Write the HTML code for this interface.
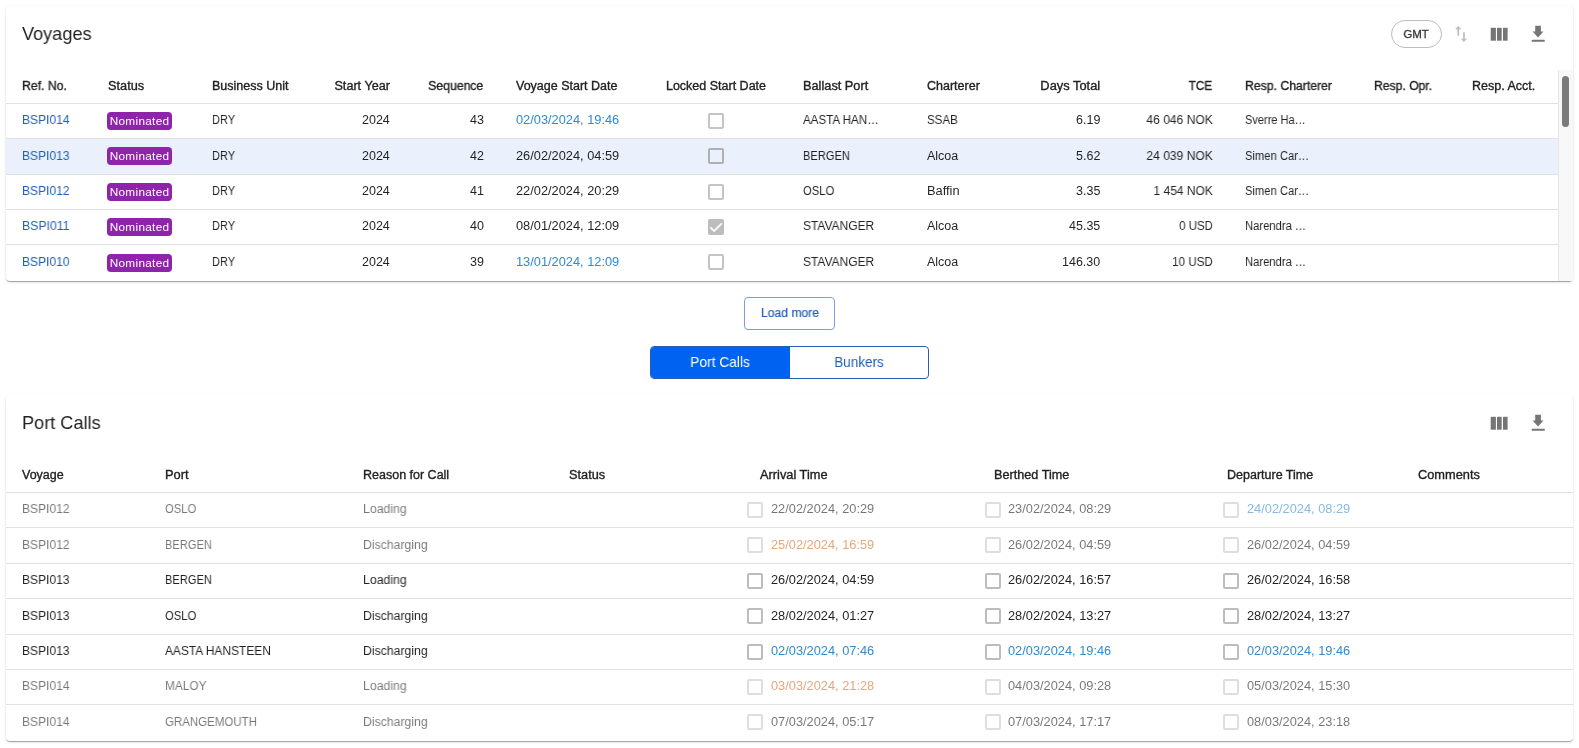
<!DOCTYPE html>
<html><head><meta charset="utf-8"><style>
html,body{margin:0;padding:0;background:#fff;width:1579px;height:748px;overflow:hidden;position:relative}
body{font-family:"Liberation Sans",sans-serif}
.t{position:absolute;white-space:nowrap;will-change:transform}
.card{position:absolute;background:#fff;border-radius:4px;box-shadow:0px 2px 1px -1px rgba(0,0,0,0.2),0px 1px 1px 0px rgba(0,0,0,0.14),0px 1px 3px 0px rgba(0,0,0,0.12)}
.hl{position:absolute;height:1px;background:#e0e0e0}
.pill{position:absolute;border:1px solid #bdbdbd;border-radius:14px}
.badge{position:absolute;width:64.8px;height:18px;background:#8e24aa;color:#fff;border-radius:4px;font-size:11.8px;line-height:18.5px;letter-spacing:0.3px;text-indent:0.3px;text-align:center;will-change:transform}
.cb{position:absolute;width:16px;height:16px;box-sizing:border-box;border:2px solid #c4c4c4;border-radius:2px}
.chk{background:#c4c4c4}
</style></head><body>
<div class="card" style="left:6px;top:6px;width:1567px;height:275px"></div>
<div class="card" style="left:6px;top:395px;width:1567px;height:346px"></div>
<div class="t" style="left:22.30px;top:23.45px;font-size:18.5px;line-height:21.27px;color:#222;font-weight:400;transform:scaleX(0.980);transform-origin:0 0;">Voyages</div>
<div class="pill" style="left:1391px;top:20.2px;width:49px;height:25.5px"></div>
<div class="t" style="left:1215.60px;width:400px;text-align:center;top:28.40px;font-size:11.5px;line-height:13.22px;color:#333;font-weight:400;transform:scaleX(0.987);transform-origin:50% 0;-webkit-text-stroke:0.3px #333;">GMT</div>
<div class="t" style="left:22.30px;top:78.78px;font-size:12.5px;line-height:14.37px;color:#222;font-weight:400;transform:scaleX(0.978);transform-origin:0 0;-webkit-text-stroke:0.35px #222;">Ref. No.</div>
<div class="t" style="left:107.60px;top:78.78px;font-size:12.5px;line-height:14.37px;color:#222;font-weight:400;transform:scaleX(1.020);transform-origin:0 0;-webkit-text-stroke:0.35px #222;">Status</div>
<div class="t" style="left:211.90px;top:78.78px;font-size:12.5px;line-height:14.37px;color:#222;font-weight:400;-webkit-text-stroke:0.35px #222;">Business Unit</div>
<div class="t" style="right:1189.10px;top:78.78px;font-size:12.5px;line-height:14.37px;color:#222;font-weight:400;transform:scaleX(1.010);transform-origin:100% 0;-webkit-text-stroke:0.35px #222;">Start Year</div>
<div class="t" style="right:1095.50px;top:78.78px;font-size:12.5px;line-height:14.37px;color:#222;font-weight:400;transform:scaleX(0.979);transform-origin:100% 0;-webkit-text-stroke:0.35px #222;">Sequence</div>
<div class="t" style="left:516.20px;top:78.78px;font-size:12.5px;line-height:14.37px;color:#222;font-weight:400;-webkit-text-stroke:0.35px #222;">Voyage Start Date</div>
<div class="t" style="left:516.00px;width:400px;text-align:center;top:78.78px;font-size:12.5px;line-height:14.37px;color:#222;font-weight:400;-webkit-text-stroke:0.35px #222;">Locked Start Date</div>
<div class="t" style="left:803.30px;top:78.78px;font-size:12.5px;line-height:14.37px;color:#222;font-weight:400;transform:scaleX(1.021);transform-origin:0 0;-webkit-text-stroke:0.35px #222;">Ballast Port</div>
<div class="t" style="left:927.30px;top:78.78px;font-size:12.5px;line-height:14.37px;color:#222;font-weight:400;-webkit-text-stroke:0.35px #222;">Charterer</div>
<div class="t" style="right:478.50px;top:78.78px;font-size:12.5px;line-height:14.37px;color:#222;font-weight:400;transform:scaleX(1.028);transform-origin:100% 0;-webkit-text-stroke:0.35px #222;">Days Total</div>
<div class="t" style="right:366.60px;top:78.78px;font-size:12.5px;line-height:14.37px;color:#222;font-weight:400;transform:scaleX(0.935);transform-origin:100% 0;-webkit-text-stroke:0.35px #222;">TCE</div>
<div class="t" style="left:1245.20px;top:78.78px;font-size:12.5px;line-height:14.37px;color:#222;font-weight:400;transform:scaleX(0.978);transform-origin:0 0;-webkit-text-stroke:0.35px #222;">Resp. Charterer</div>
<div class="t" style="left:1373.70px;top:78.78px;font-size:12.5px;line-height:14.37px;color:#222;font-weight:400;transform:scaleX(0.972);transform-origin:0 0;-webkit-text-stroke:0.35px #222;">Resp. Opr.</div>
<div class="t" style="left:1471.50px;top:78.78px;font-size:12.5px;line-height:14.37px;color:#222;font-weight:400;-webkit-text-stroke:0.35px #222;">Resp. Acct.</div>
<div class="hl" style="left:6px;top:103px;width:1552.5px"></div>
<div class="hl" style="left:6px;top:138px;width:1552.5px"></div>
<div class="hl" style="left:6px;top:174px;width:1552.5px"></div>
<div class="hl" style="left:6px;top:209px;width:1552.5px"></div>
<div class="hl" style="left:6px;top:244px;width:1552.5px"></div>
<div style="position:absolute;left:6px;top:139px;width:1552.5px;height:35px;background:#eaf1fc"></div>
<div class="t" style="left:22.30px;top:112.78px;font-size:12.5px;line-height:14.37px;color:#1d5fb6;font-weight:400;transform:scaleX(0.962);transform-origin:0 0;">BSPI014</div>
<div class="badge" style="left:107.1px;top:111.80px">Nominated</div>
<div class="t" style="left:211.90px;top:112.78px;font-size:12.5px;line-height:14.37px;color:rgba(0,0,0,0.87);font-weight:400;transform:scaleX(0.887);transform-origin:0 0;">DRY</div>
<div class="t" style="right:1189.10px;top:112.78px;font-size:12.5px;line-height:14.37px;color:rgba(0,0,0,0.87);font-weight:400;">2024</div>
<div class="t" style="right:1095.50px;top:112.78px;font-size:12.5px;line-height:14.37px;color:rgba(0,0,0,0.87);font-weight:400;">43</div>
<div class="t" style="left:516.20px;top:112.78px;font-size:12.5px;line-height:14.37px;color:#2f8bd0;font-weight:400;transform:scaleX(1.024);transform-origin:0 0;">02/03/2024, 19:46</div>
<div class="cb" style="left:708px;top:113px;border-color:#c4c4c4"></div>
<div class="t" style="left:803.30px;top:112.78px;font-size:12.5px;line-height:14.37px;color:rgba(0,0,0,0.87);font-weight:400;transform:scaleX(0.927);transform-origin:0 0;">AASTA HAN…</div>
<div class="t" style="left:927.30px;top:112.78px;font-size:12.5px;line-height:14.37px;color:rgba(0,0,0,0.87);font-weight:400;transform:scaleX(0.924);transform-origin:0 0;">SSAB</div>
<div class="t" style="right:478.50px;top:112.78px;font-size:12.5px;line-height:14.37px;color:rgba(0,0,0,0.87);font-weight:400;">6.19</div>
<div class="t" style="right:366.60px;top:112.78px;font-size:12.5px;line-height:14.37px;color:rgba(0,0,0,0.87);font-weight:400;transform:scaleX(0.965);transform-origin:100% 0;">46 046 NOK</div>
<div class="t" style="left:1245.20px;top:112.78px;font-size:12.5px;line-height:14.37px;color:rgba(0,0,0,0.87);font-weight:400;transform:scaleX(0.883);transform-origin:0 0;">Sverre Ha…</div>
<div class="t" style="left:22.30px;top:148.78px;font-size:12.5px;line-height:14.37px;color:#1d5fb6;font-weight:400;transform:scaleX(0.962);transform-origin:0 0;">BSPI013</div>
<div class="badge" style="left:107.1px;top:147.30px">Nominated</div>
<div class="t" style="left:211.90px;top:148.78px;font-size:12.5px;line-height:14.37px;color:rgba(0,0,0,0.87);font-weight:400;transform:scaleX(0.887);transform-origin:0 0;">DRY</div>
<div class="t" style="right:1189.10px;top:148.78px;font-size:12.5px;line-height:14.37px;color:rgba(0,0,0,0.87);font-weight:400;">2024</div>
<div class="t" style="right:1095.50px;top:148.78px;font-size:12.5px;line-height:14.37px;color:rgba(0,0,0,0.87);font-weight:400;">42</div>
<div class="t" style="left:516.20px;top:148.78px;font-size:12.5px;line-height:14.37px;color:rgba(0,0,0,0.87);font-weight:400;transform:scaleX(1.024);transform-origin:0 0;">26/02/2024, 04:59</div>
<div class="cb" style="left:708px;top:148px;border-color:#b0b0b0"></div>
<div class="t" style="left:803.30px;top:148.78px;font-size:12.5px;line-height:14.37px;color:rgba(0,0,0,0.87);font-weight:400;transform:scaleX(0.888);transform-origin:0 0;">BERGEN</div>
<div class="t" style="left:927.30px;top:148.78px;font-size:12.5px;line-height:14.37px;color:rgba(0,0,0,0.87);font-weight:400;">Alcoa</div>
<div class="t" style="right:478.50px;top:148.78px;font-size:12.5px;line-height:14.37px;color:rgba(0,0,0,0.87);font-weight:400;">5.62</div>
<div class="t" style="right:366.60px;top:148.78px;font-size:12.5px;line-height:14.37px;color:rgba(0,0,0,0.87);font-weight:400;transform:scaleX(0.965);transform-origin:100% 0;">24 039 NOK</div>
<div class="t" style="left:1245.20px;top:148.78px;font-size:12.5px;line-height:14.37px;color:rgba(0,0,0,0.87);font-weight:400;transform:scaleX(0.896);transform-origin:0 0;">Simen Car…</div>
<div class="t" style="left:22.30px;top:183.78px;font-size:12.5px;line-height:14.37px;color:#1d5fb6;font-weight:400;transform:scaleX(0.962);transform-origin:0 0;">BSPI012</div>
<div class="badge" style="left:107.1px;top:182.80px">Nominated</div>
<div class="t" style="left:211.90px;top:183.78px;font-size:12.5px;line-height:14.37px;color:rgba(0,0,0,0.87);font-weight:400;transform:scaleX(0.887);transform-origin:0 0;">DRY</div>
<div class="t" style="right:1189.10px;top:183.78px;font-size:12.5px;line-height:14.37px;color:rgba(0,0,0,0.87);font-weight:400;">2024</div>
<div class="t" style="right:1095.50px;top:183.78px;font-size:12.5px;line-height:14.37px;color:rgba(0,0,0,0.87);font-weight:400;">41</div>
<div class="t" style="left:516.20px;top:183.78px;font-size:12.5px;line-height:14.37px;color:rgba(0,0,0,0.87);font-weight:400;transform:scaleX(1.024);transform-origin:0 0;">22/02/2024, 20:29</div>
<div class="cb" style="left:708px;top:184px;border-color:#c4c4c4"></div>
<div class="t" style="left:803.30px;top:183.78px;font-size:12.5px;line-height:14.37px;color:rgba(0,0,0,0.87);font-weight:400;transform:scaleX(0.902);transform-origin:0 0;">OSLO</div>
<div class="t" style="left:927.30px;top:183.78px;font-size:12.5px;line-height:14.37px;color:rgba(0,0,0,0.87);font-weight:400;transform:scaleX(1.026);transform-origin:0 0;">Baffin</div>
<div class="t" style="right:478.50px;top:183.78px;font-size:12.5px;line-height:14.37px;color:rgba(0,0,0,0.87);font-weight:400;">3.35</div>
<div class="t" style="right:366.60px;top:183.78px;font-size:12.5px;line-height:14.37px;color:rgba(0,0,0,0.87);font-weight:400;transform:scaleX(0.960);transform-origin:100% 0;">1 454 NOK</div>
<div class="t" style="left:1245.20px;top:183.78px;font-size:12.5px;line-height:14.37px;color:rgba(0,0,0,0.87);font-weight:400;transform:scaleX(0.896);transform-origin:0 0;">Simen Car…</div>
<div class="t" style="left:22.30px;top:218.78px;font-size:12.5px;line-height:14.37px;color:#1d5fb6;font-weight:400;transform:scaleX(0.981);transform-origin:0 0;">BSPI011</div>
<div class="badge" style="left:107.1px;top:218.30px">Nominated</div>
<div class="t" style="left:211.90px;top:218.78px;font-size:12.5px;line-height:14.37px;color:rgba(0,0,0,0.87);font-weight:400;transform:scaleX(0.887);transform-origin:0 0;">DRY</div>
<div class="t" style="right:1189.10px;top:218.78px;font-size:12.5px;line-height:14.37px;color:rgba(0,0,0,0.87);font-weight:400;">2024</div>
<div class="t" style="right:1095.50px;top:218.78px;font-size:12.5px;line-height:14.37px;color:rgba(0,0,0,0.87);font-weight:400;">40</div>
<div class="t" style="left:516.20px;top:218.78px;font-size:12.5px;line-height:14.37px;color:rgba(0,0,0,0.87);font-weight:400;transform:scaleX(1.024);transform-origin:0 0;">08/01/2024, 12:09</div>
<div class="cb chk" style="left:708px;top:219px;border:none;background:#bdbdbd"><svg style="position:absolute;left:0;top:0" width="16" height="16" viewBox="0 0 16 16"><path d="M2.4 8.4 L6.1 12 L13.8 4.3" stroke="#fff" stroke-width="1.7" fill="none"/></svg></div>
<div class="t" style="left:803.30px;top:218.78px;font-size:12.5px;line-height:14.37px;color:rgba(0,0,0,0.87);font-weight:400;transform:scaleX(0.958);transform-origin:0 0;">STAVANGER</div>
<div class="t" style="left:927.30px;top:218.78px;font-size:12.5px;line-height:14.37px;color:rgba(0,0,0,0.87);font-weight:400;">Alcoa</div>
<div class="t" style="right:478.50px;top:218.78px;font-size:12.5px;line-height:14.37px;color:rgba(0,0,0,0.87);font-weight:400;">45.35</div>
<div class="t" style="right:366.60px;top:218.78px;font-size:12.5px;line-height:14.37px;color:rgba(0,0,0,0.87);font-weight:400;transform:scaleX(0.914);transform-origin:100% 0;">0 USD</div>
<div class="t" style="left:1245.20px;top:218.78px;font-size:12.5px;line-height:14.37px;color:rgba(0,0,0,0.87);font-weight:400;transform:scaleX(0.898);transform-origin:0 0;">Narendra …</div>
<div class="t" style="left:22.30px;top:254.78px;font-size:12.5px;line-height:14.37px;color:#1d5fb6;font-weight:400;transform:scaleX(0.962);transform-origin:0 0;">BSPI010</div>
<div class="badge" style="left:107.1px;top:253.80px">Nominated</div>
<div class="t" style="left:211.90px;top:254.78px;font-size:12.5px;line-height:14.37px;color:rgba(0,0,0,0.87);font-weight:400;transform:scaleX(0.887);transform-origin:0 0;">DRY</div>
<div class="t" style="right:1189.10px;top:254.78px;font-size:12.5px;line-height:14.37px;color:rgba(0,0,0,0.87);font-weight:400;">2024</div>
<div class="t" style="right:1095.50px;top:254.78px;font-size:12.5px;line-height:14.37px;color:rgba(0,0,0,0.87);font-weight:400;">39</div>
<div class="t" style="left:516.20px;top:254.78px;font-size:12.5px;line-height:14.37px;color:#2f8bd0;font-weight:400;transform:scaleX(1.024);transform-origin:0 0;">13/01/2024, 12:09</div>
<div class="cb" style="left:708px;top:254px;border-color:#c4c4c4"></div>
<div class="t" style="left:803.30px;top:254.78px;font-size:12.5px;line-height:14.37px;color:rgba(0,0,0,0.87);font-weight:400;transform:scaleX(0.958);transform-origin:0 0;">STAVANGER</div>
<div class="t" style="left:927.30px;top:254.78px;font-size:12.5px;line-height:14.37px;color:rgba(0,0,0,0.87);font-weight:400;">Alcoa</div>
<div class="t" style="right:478.50px;top:254.78px;font-size:12.5px;line-height:14.37px;color:rgba(0,0,0,0.87);font-weight:400;">146.30</div>
<div class="t" style="right:366.60px;top:254.78px;font-size:12.5px;line-height:14.37px;color:rgba(0,0,0,0.87);font-weight:400;transform:scaleX(0.930);transform-origin:100% 0;">10 USD</div>
<div class="t" style="left:1245.20px;top:254.78px;font-size:12.5px;line-height:14.37px;color:rgba(0,0,0,0.87);font-weight:400;transform:scaleX(0.898);transform-origin:0 0;">Narendra …</div>
<div style="position:absolute;left:1558.3px;top:69.8px;width:14.7px;height:211px;background:#f8f8f8;border-left:1px solid #e6e6e6;box-sizing:border-box"></div>
<div style="position:absolute;left:1562px;top:75.8px;width:7.1px;height:51px;background:#7b7b7b;border-radius:4px"></div>
<div style="position:absolute;left:744.2px;top:297.2px;width:90.5px;height:32.8px;box-sizing:border-box;border:1px solid #7d9dd6;border-radius:4px"></div>
<div class="t" style="left:589.50px;width:400px;text-align:center;top:305.68px;font-size:12.5px;line-height:14.37px;color:#1d5fb6;font-weight:400;transform:scaleX(0.969);transform-origin:50% 0;-webkit-text-stroke:0.2px #1d5fb6;">Load more</div>
<div style="position:absolute;left:650.1px;top:346.1px;width:278.7px;height:32.5px;box-sizing:border-box;border:1px solid #2a5fb0;border-radius:4px;overflow:hidden"><div style="position:absolute;left:0;top:0;width:138.6px;height:100%;background:#0062f0"></div></div>
<div class="t" style="left:520.10px;width:400px;text-align:center;top:354.24px;font-size:14.5px;line-height:16.67px;color:#fff;font-weight:400;transform:scaleX(0.946);transform-origin:50% 0;">Port Calls</div>
<div class="t" style="left:658.90px;width:400px;text-align:center;top:354.24px;font-size:14.5px;line-height:16.67px;color:#1d5fb6;font-weight:400;transform:scaleX(0.933);transform-origin:50% 0;">Bunkers</div>
<div class="t" style="left:22.40px;top:412.35px;font-size:18.5px;line-height:21.27px;color:#222;font-weight:400;transform:scaleX(0.980);transform-origin:0 0;">Port Calls</div>
<div class="t" style="left:22.30px;top:468.08px;font-size:12.5px;line-height:14.37px;color:#222;font-weight:400;-webkit-text-stroke:0.35px #222;">Voyage</div>
<div class="t" style="left:165.20px;top:468.08px;font-size:12.5px;line-height:14.37px;color:#222;font-weight:400;transform:scaleX(1.032);transform-origin:0 0;-webkit-text-stroke:0.35px #222;">Port</div>
<div class="t" style="left:362.70px;top:468.08px;font-size:12.5px;line-height:14.37px;color:#222;font-weight:400;-webkit-text-stroke:0.35px #222;">Reason for Call</div>
<div class="t" style="left:569.00px;top:468.08px;font-size:12.5px;line-height:14.37px;color:#222;font-weight:400;transform:scaleX(1.020);transform-origin:0 0;-webkit-text-stroke:0.35px #222;">Status</div>
<div class="t" style="left:760.30px;top:468.08px;font-size:12.5px;line-height:14.37px;color:#222;font-weight:400;transform:scaleX(1.024);transform-origin:0 0;-webkit-text-stroke:0.35px #222;">Arrival Time</div>
<div class="t" style="left:994.40px;top:468.08px;font-size:12.5px;line-height:14.37px;color:#222;font-weight:400;transform:scaleX(1.013);transform-origin:0 0;-webkit-text-stroke:0.35px #222;">Berthed Time</div>
<div class="t" style="left:1226.60px;top:468.08px;font-size:12.5px;line-height:14.37px;color:#222;font-weight:400;-webkit-text-stroke:0.35px #222;">Departure Time</div>
<div class="t" style="left:1417.70px;top:468.08px;font-size:12.5px;line-height:14.37px;color:#222;font-weight:400;transform:scaleX(1.024);transform-origin:0 0;-webkit-text-stroke:0.35px #222;">Comments</div>
<div class="hl" style="left:6px;top:492px;width:1567px"></div>
<div class="hl" style="left:6px;top:527px;width:1567px"></div>
<div class="hl" style="left:6px;top:563px;width:1567px"></div>
<div class="hl" style="left:6px;top:598px;width:1567px"></div>
<div class="hl" style="left:6px;top:634px;width:1567px"></div>
<div class="hl" style="left:6px;top:669px;width:1567px"></div>
<div class="hl" style="left:6px;top:704px;width:1567px"></div>
<div class="t" style="left:22.30px;top:501.78px;font-size:12.5px;line-height:14.37px;color:rgba(0,0,0,0.54);font-weight:400;transform:scaleX(0.962);transform-origin:0 0;">BSPI012</div>
<div class="t" style="left:165.20px;top:501.78px;font-size:12.5px;line-height:14.37px;color:rgba(0,0,0,0.54);font-weight:400;transform:scaleX(0.902);transform-origin:0 0;">OSLO</div>
<div class="t" style="left:362.70px;top:501.78px;font-size:12.5px;line-height:14.37px;color:rgba(0,0,0,0.54);font-weight:400;transform:scaleX(0.983);transform-origin:0 0;">Loading</div>
<div class="cb" style="left:747.1px;top:502px;border-color:#dedede"></div>
<div class="t" style="left:770.90px;top:501.78px;font-size:12.5px;line-height:14.37px;color:rgba(0,0,0,0.54);font-weight:400;transform:scaleX(1.024);transform-origin:0 0;">22/02/2024, 20:29</div>
<div class="cb" style="left:984.8px;top:502px;border-color:#dedede"></div>
<div class="t" style="left:1008.40px;top:501.78px;font-size:12.5px;line-height:14.37px;color:rgba(0,0,0,0.54);font-weight:400;transform:scaleX(1.024);transform-origin:0 0;">23/02/2024, 08:29</div>
<div class="cb" style="left:1223.3px;top:502px;border-color:#dedede"></div>
<div class="t" style="left:1246.60px;top:501.78px;font-size:12.5px;line-height:14.37px;color:#86bbe4;font-weight:400;transform:scaleX(1.024);transform-origin:0 0;">24/02/2024, 08:29</div>
<div class="t" style="left:22.30px;top:537.78px;font-size:12.5px;line-height:14.37px;color:rgba(0,0,0,0.54);font-weight:400;transform:scaleX(0.962);transform-origin:0 0;">BSPI012</div>
<div class="t" style="left:165.20px;top:537.78px;font-size:12.5px;line-height:14.37px;color:rgba(0,0,0,0.54);font-weight:400;transform:scaleX(0.888);transform-origin:0 0;">BERGEN</div>
<div class="t" style="left:362.70px;top:537.78px;font-size:12.5px;line-height:14.37px;color:rgba(0,0,0,0.54);font-weight:400;transform:scaleX(0.981);transform-origin:0 0;">Discharging</div>
<div class="cb" style="left:747.1px;top:537px;border-color:#dedede"></div>
<div class="t" style="left:770.90px;top:537.78px;font-size:12.5px;line-height:14.37px;color:#e2a87e;font-weight:400;transform:scaleX(1.024);transform-origin:0 0;">25/02/2024, 16:59</div>
<div class="cb" style="left:984.8px;top:537px;border-color:#dedede"></div>
<div class="t" style="left:1008.40px;top:537.78px;font-size:12.5px;line-height:14.37px;color:rgba(0,0,0,0.54);font-weight:400;transform:scaleX(1.024);transform-origin:0 0;">26/02/2024, 04:59</div>
<div class="cb" style="left:1223.3px;top:537px;border-color:#dedede"></div>
<div class="t" style="left:1246.60px;top:537.78px;font-size:12.5px;line-height:14.37px;color:rgba(0,0,0,0.54);font-weight:400;transform:scaleX(1.024);transform-origin:0 0;">26/02/2024, 04:59</div>
<div class="t" style="left:22.30px;top:572.78px;font-size:12.5px;line-height:14.37px;color:rgba(0,0,0,0.87);font-weight:400;transform:scaleX(0.962);transform-origin:0 0;">BSPI013</div>
<div class="t" style="left:165.20px;top:572.78px;font-size:12.5px;line-height:14.37px;color:rgba(0,0,0,0.87);font-weight:400;transform:scaleX(0.888);transform-origin:0 0;">BERGEN</div>
<div class="t" style="left:362.70px;top:572.78px;font-size:12.5px;line-height:14.37px;color:rgba(0,0,0,0.87);font-weight:400;transform:scaleX(0.983);transform-origin:0 0;">Loading</div>
<div class="cb" style="left:747.1px;top:573px;border-color:#bdbdbd"></div>
<div class="t" style="left:770.90px;top:572.78px;font-size:12.5px;line-height:14.37px;color:rgba(0,0,0,0.87);font-weight:400;transform:scaleX(1.024);transform-origin:0 0;">26/02/2024, 04:59</div>
<div class="cb" style="left:984.8px;top:573px;border-color:#bdbdbd"></div>
<div class="t" style="left:1008.40px;top:572.78px;font-size:12.5px;line-height:14.37px;color:rgba(0,0,0,0.87);font-weight:400;transform:scaleX(1.024);transform-origin:0 0;">26/02/2024, 16:57</div>
<div class="cb" style="left:1223.3px;top:573px;border-color:#bdbdbd"></div>
<div class="t" style="left:1246.60px;top:572.78px;font-size:12.5px;line-height:14.37px;color:rgba(0,0,0,0.87);font-weight:400;transform:scaleX(1.024);transform-origin:0 0;">26/02/2024, 16:58</div>
<div class="t" style="left:22.30px;top:608.78px;font-size:12.5px;line-height:14.37px;color:rgba(0,0,0,0.87);font-weight:400;transform:scaleX(0.962);transform-origin:0 0;">BSPI013</div>
<div class="t" style="left:165.20px;top:608.78px;font-size:12.5px;line-height:14.37px;color:rgba(0,0,0,0.87);font-weight:400;transform:scaleX(0.902);transform-origin:0 0;">OSLO</div>
<div class="t" style="left:362.70px;top:608.78px;font-size:12.5px;line-height:14.37px;color:rgba(0,0,0,0.87);font-weight:400;transform:scaleX(0.981);transform-origin:0 0;">Discharging</div>
<div class="cb" style="left:747.1px;top:608px;border-color:#bdbdbd"></div>
<div class="t" style="left:770.90px;top:608.78px;font-size:12.5px;line-height:14.37px;color:rgba(0,0,0,0.87);font-weight:400;transform:scaleX(1.024);transform-origin:0 0;">28/02/2024, 01:27</div>
<div class="cb" style="left:984.8px;top:608px;border-color:#bdbdbd"></div>
<div class="t" style="left:1008.40px;top:608.78px;font-size:12.5px;line-height:14.37px;color:rgba(0,0,0,0.87);font-weight:400;transform:scaleX(1.024);transform-origin:0 0;">28/02/2024, 13:27</div>
<div class="cb" style="left:1223.3px;top:608px;border-color:#bdbdbd"></div>
<div class="t" style="left:1246.60px;top:608.78px;font-size:12.5px;line-height:14.37px;color:rgba(0,0,0,0.87);font-weight:400;transform:scaleX(1.024);transform-origin:0 0;">28/02/2024, 13:27</div>
<div class="t" style="left:22.30px;top:643.78px;font-size:12.5px;line-height:14.37px;color:rgba(0,0,0,0.87);font-weight:400;transform:scaleX(0.962);transform-origin:0 0;">BSPI013</div>
<div class="t" style="left:165.20px;top:643.78px;font-size:12.5px;line-height:14.37px;color:rgba(0,0,0,0.87);font-weight:400;transform:scaleX(0.954);transform-origin:0 0;">AASTA HANSTEEN</div>
<div class="t" style="left:362.70px;top:643.78px;font-size:12.5px;line-height:14.37px;color:rgba(0,0,0,0.87);font-weight:400;transform:scaleX(0.981);transform-origin:0 0;">Discharging</div>
<div class="cb" style="left:747.1px;top:644px;border-color:#bdbdbd"></div>
<div class="t" style="left:770.90px;top:643.78px;font-size:12.5px;line-height:14.37px;color:#2f8bd0;font-weight:400;transform:scaleX(1.024);transform-origin:0 0;">02/03/2024, 07:46</div>
<div class="cb" style="left:984.8px;top:644px;border-color:#bdbdbd"></div>
<div class="t" style="left:1008.40px;top:643.78px;font-size:12.5px;line-height:14.37px;color:#2f8bd0;font-weight:400;transform:scaleX(1.024);transform-origin:0 0;">02/03/2024, 19:46</div>
<div class="cb" style="left:1223.3px;top:644px;border-color:#bdbdbd"></div>
<div class="t" style="left:1246.60px;top:643.78px;font-size:12.5px;line-height:14.37px;color:#2f8bd0;font-weight:400;transform:scaleX(1.024);transform-origin:0 0;">02/03/2024, 19:46</div>
<div class="t" style="left:22.30px;top:678.78px;font-size:12.5px;line-height:14.37px;color:rgba(0,0,0,0.54);font-weight:400;transform:scaleX(0.962);transform-origin:0 0;">BSPI014</div>
<div class="t" style="left:165.20px;top:678.78px;font-size:12.5px;line-height:14.37px;color:rgba(0,0,0,0.54);font-weight:400;transform:scaleX(0.947);transform-origin:0 0;">MALOY</div>
<div class="t" style="left:362.70px;top:678.78px;font-size:12.5px;line-height:14.37px;color:rgba(0,0,0,0.54);font-weight:400;transform:scaleX(0.983);transform-origin:0 0;">Loading</div>
<div class="cb" style="left:747.1px;top:679px;border-color:#dedede"></div>
<div class="t" style="left:770.90px;top:678.78px;font-size:12.5px;line-height:14.37px;color:#e2a87e;font-weight:400;transform:scaleX(1.024);transform-origin:0 0;">03/03/2024, 21:28</div>
<div class="cb" style="left:984.8px;top:679px;border-color:#dedede"></div>
<div class="t" style="left:1008.40px;top:678.78px;font-size:12.5px;line-height:14.37px;color:rgba(0,0,0,0.54);font-weight:400;transform:scaleX(1.024);transform-origin:0 0;">04/03/2024, 09:28</div>
<div class="cb" style="left:1223.3px;top:679px;border-color:#dedede"></div>
<div class="t" style="left:1246.60px;top:678.78px;font-size:12.5px;line-height:14.37px;color:rgba(0,0,0,0.54);font-weight:400;transform:scaleX(1.024);transform-origin:0 0;">05/03/2024, 15:30</div>
<div class="t" style="left:22.30px;top:714.78px;font-size:12.5px;line-height:14.37px;color:rgba(0,0,0,0.54);font-weight:400;transform:scaleX(0.962);transform-origin:0 0;">BSPI014</div>
<div class="t" style="left:165.20px;top:714.78px;font-size:12.5px;line-height:14.37px;color:rgba(0,0,0,0.54);font-weight:400;transform:scaleX(0.920);transform-origin:0 0;">GRANGEMOUTH</div>
<div class="t" style="left:362.70px;top:714.78px;font-size:12.5px;line-height:14.37px;color:rgba(0,0,0,0.54);font-weight:400;transform:scaleX(0.981);transform-origin:0 0;">Discharging</div>
<div class="cb" style="left:747.1px;top:714px;border-color:#dedede"></div>
<div class="t" style="left:770.90px;top:714.78px;font-size:12.5px;line-height:14.37px;color:rgba(0,0,0,0.54);font-weight:400;transform:scaleX(1.024);transform-origin:0 0;">07/03/2024, 05:17</div>
<div class="cb" style="left:984.8px;top:714px;border-color:#dedede"></div>
<div class="t" style="left:1008.40px;top:714.78px;font-size:12.5px;line-height:14.37px;color:rgba(0,0,0,0.54);font-weight:400;transform:scaleX(1.024);transform-origin:0 0;">07/03/2024, 17:17</div>
<div class="cb" style="left:1223.3px;top:714px;border-color:#dedede"></div>
<div class="t" style="left:1246.60px;top:714.78px;font-size:12.5px;line-height:14.37px;color:rgba(0,0,0,0.54);font-weight:400;transform:scaleX(1.024);transform-origin:0 0;">08/03/2024, 23:18</div>
<svg style="position:absolute;left:1440px;top:0px" width="120" height="60" viewBox="1440 0 120 60"><rect x="1490.7" y="27.8" width="5.20" height="12.90" fill="#757575"/><rect x="1497.0" y="27.8" width="4.70" height="12.90" fill="#757575"/><rect x="1503.0" y="27.8" width="4.60" height="12.90" fill="#757575"/><path d="M1535.2 25.8 H1540.9 V31.4 H1543.5 L1538.05 37.4 L1532.6 31.4 H1535.2 Z" fill="#757575"/><rect x="1531.8" y="39.70" width="12.9" height="2" rx="0.5" fill="#757575"/><path d="M1458.3 25.9 L1461.4 29.2 H1459.15 V35.8 H1457.45 V29.2 H1455.2 Z" fill="#bdbdbd"/><path d="M1463.95 42.0 L1467.1 38.8 H1464.8 V32.3 H1463.1 V38.8 H1460.8 Z" fill="#bdbdbd"/></svg>
<svg style="position:absolute;left:1440px;top:389px" width="120" height="60" viewBox="1440 389 120 60"><rect x="1490.7" y="416.8" width="5.20" height="12.90" fill="#757575"/><rect x="1497.0" y="416.8" width="4.70" height="12.90" fill="#757575"/><rect x="1503.0" y="416.8" width="4.60" height="12.90" fill="#757575"/><path d="M1535.2 414.8 H1540.9 V420.40000000000003 H1543.5 L1538.05 426.40000000000003 L1532.6 420.40000000000003 H1535.2 Z" fill="#757575"/><rect x="1531.8" y="428.70" width="12.9" height="2" rx="0.5" fill="#757575"/></svg>
</body></html>
